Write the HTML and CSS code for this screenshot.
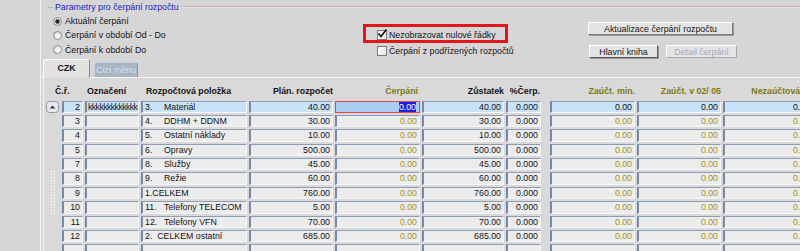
FILE: index.html
```html
<html>
  <head>
    <title>Čerpání rozpočtu</title>
    <link rel="stylesheet" href="styles.css">
  </head>

  <body>
    <div class="window">
      <div class="gutter"></div>
      <div class="content">
        <div class="params">
          <div class="legend-row">
            <span class="dash"></span>
            <span class="legend">Parametry pro čerpání rozpočtu</span>
            <span class="rule"></span>
          </div>
          <div class="params-body">
            <div class="radios">
              <div class="radio-row"><span class="radio radio-on"></span>Aktuální čerpání</div>
              <div class="radio-row"><span class="radio"></span>Čerpání v období Od - Do</div>
              <div class="radio-row"><span class="radio"></span>Čerpání k období Do</div>
            </div>
            <div class="checks">
              <div class="hl-box">
                <div class="check-row">
                  <span class="checkbox">
                    <svg width="11" height="11" viewBox="0 0 11 11"><path d="M1.5 4.5 L4 7.5 L9.5 0.5" fill="none" stroke="#161616" stroke-width="1.7"/></svg>
                  </span>
                  Nezobrazovat nulové řádky
                </div>
              </div>
              <div class="check-row check-row-plain">
                <span class="checkbox"></span>
                Čerpání z podřízených rozpočtů
              </div>
            </div>
            <div class="buttons">
              <button class="btn btn-wide">Aktualizace čerpání rozpočtu</button>
              <div class="btn-row">
                <button class="btn btn-main">Hlavní kniha</button>
                <button class="btn btn-off">Detail čerpání</button>
              </div>
            </div>
          </div>
        </div>

        <div class="tabs">
          <div class="tab tab-active">CZK</div>
          <div class="tab tab-off">Cizí měnu</div>
        </div>

        <div class="panel">
          <div class="grid">
            <div class="hd hd-nr">Č.ř.</div>
            <div class="hd hd-code">Označení</div>
            <div class="hd hd-item">Rozpočtová položka</div>
            <div class="hd right">Plán. rozpočet</div>
            <div class="hd right hd-olive pr2">Čerpání</div>
            <div class="hd right">Zůstatek</div>
            <div class="hd right pr1">%Čerp.</div>
            <div class="hd"></div>
            <div class="hd right hd-olive">Zaúčt. min.</div>
            <div class="hd right hd-olive">Zaúčt. v 02/ 05</div>
            <div class="hd right hd-olive pr2">Nezaúčtováno</div>

            <div class="scroll-up">
              <svg width="13" height="12" viewBox="0 0 13 12"><rect x="0.5" y="0.5" width="12" height="11" rx="3" fill="#e6e8ec" stroke="#9298a2"/><path d="M3.5 7.5 L6.5 4.5 L9.5 7.5 Z" fill="#3a3e46"/></svg>
            </div>
            <div class="scroll-track"><div class="grip"></div></div>

            <div class="row sel">
              <div class="cell right">2</div>
              <div class="cell code">kkkkkkkkkkkkkk</div>
              <div class="cell"><span class="num">3.</span>Materiál</div>
              <div class="cell right">40.00</div>
              <div class="cell right edit"><span class="hl">0.00</span></div>
              <div class="cell right">40.00</div>
              <div class="cell right">0.000</div>
              <div class="gap"></div>
              <div class="cell right">0.00</div>
              <div class="cell right">0.00</div>
              <div class="cell right">0.00</div>
            </div>

            <div class="row">
              <div class="cell right">3</div>
              <div class="cell"></div>
              <div class="cell"><span class="num">4.</span>DDHM + DDNM</div>
              <div class="cell right">30.00</div>
              <div class="cell right olive">0.00</div>
              <div class="cell right">30.00</div>
              <div class="cell right">0.000</div>
              <div class="gap"></div>
              <div class="cell right olive">0.00</div>
              <div class="cell right olive">0.00</div>
              <div class="cell right olive">0.00</div>
            </div>

            <div class="row">
              <div class="cell right">4</div>
              <div class="cell"></div>
              <div class="cell"><span class="num">5.</span>Ostatní náklady</div>
              <div class="cell right">10.00</div>
              <div class="cell right olive">0.00</div>
              <div class="cell right">10.00</div>
              <div class="cell right">0.000</div>
              <div class="gap"></div>
              <div class="cell right olive">0.00</div>
              <div class="cell right olive">0.00</div>
              <div class="cell right olive">0.00</div>
            </div>

            <div class="row">
              <div class="cell right">5</div>
              <div class="cell"></div>
              <div class="cell"><span class="num">6.</span>Opravy</div>
              <div class="cell right">500.00</div>
              <div class="cell right olive">0.00</div>
              <div class="cell right">500.00</div>
              <div class="cell right">0.000</div>
              <div class="gap"></div>
              <div class="cell right olive">0.00</div>
              <div class="cell right olive">0.00</div>
              <div class="cell right olive">0.00</div>
            </div>

            <div class="row">
              <div class="cell right">7</div>
              <div class="cell"></div>
              <div class="cell"><span class="num">8.</span>Služby</div>
              <div class="cell right">45.00</div>
              <div class="cell right olive">0.00</div>
              <div class="cell right">45.00</div>
              <div class="cell right">0.000</div>
              <div class="gap"></div>
              <div class="cell right olive">0.00</div>
              <div class="cell right olive">0.00</div>
              <div class="cell right olive">0.00</div>
            </div>

            <div class="row">
              <div class="cell right">8</div>
              <div class="cell"></div>
              <div class="cell"><span class="num">9.</span>Režie</div>
              <div class="cell right">60.00</div>
              <div class="cell right olive">0.00</div>
              <div class="cell right">60.00</div>
              <div class="cell right">0.000</div>
              <div class="gap"></div>
              <div class="cell right olive">0.00</div>
              <div class="cell right olive">0.00</div>
              <div class="cell right olive">0.00</div>
            </div>

            <div class="row">
              <div class="cell right">9</div>
              <div class="cell"></div>
              <div class="cell">1.CELKEM</div>
              <div class="cell right">760.00</div>
              <div class="cell right olive">0.00</div>
              <div class="cell right">760.00</div>
              <div class="cell right">0.000</div>
              <div class="gap"></div>
              <div class="cell right olive">0.00</div>
              <div class="cell right olive">0.00</div>
              <div class="cell right olive">0.00</div>
            </div>

            <div class="row">
              <div class="cell right">10</div>
              <div class="cell"></div>
              <div class="cell"><span class="num">11.</span>Telefony TELECOM</div>
              <div class="cell right">5.00</div>
              <div class="cell right olive">0.00</div>
              <div class="cell right">5.00</div>
              <div class="cell right">0.000</div>
              <div class="gap"></div>
              <div class="cell right olive">0.00</div>
              <div class="cell right olive">0.00</div>
              <div class="cell right olive">0.00</div>
            </div>

            <div class="row">
              <div class="cell right">11</div>
              <div class="cell"></div>
              <div class="cell"><span class="num">12.</span>Telefony VFN</div>
              <div class="cell right">70.00</div>
              <div class="cell right olive">0.00</div>
              <div class="cell right">70.00</div>
              <div class="cell right">0.000</div>
              <div class="gap"></div>
              <div class="cell right olive">0.00</div>
              <div class="cell right olive">0.00</div>
              <div class="cell right olive">0.00</div>
            </div>

            <div class="row">
              <div class="cell right">12</div>
              <div class="cell"></div>
              <div class="cell pre">2.  CELKEM ostatní</div>
              <div class="cell right">685.00</div>
              <div class="cell right olive">0.00</div>
              <div class="cell right">685.00</div>
              <div class="cell right">0.000</div>
              <div class="gap"></div>
              <div class="cell right olive">0.00</div>
              <div class="cell right olive">0.00</div>
              <div class="cell right olive">0.00</div>
            </div>

            <div class="row">
              <div class="cell"></div>
              <div class="cell"></div>
              <div class="cell"></div>
              <div class="cell"></div>
              <div class="cell"></div>
              <div class="cell"></div>
              <div class="cell"></div>
              <div class="gap"></div>
              <div class="cell"></div>
              <div class="cell"></div>
              <div class="cell"></div>
            </div>
          </div>
        </div>
      </div>
    </div>
  </body>
</html>
```

FILE: styles.css
```css
:root {
  --bg: #d6d6d6;
  --panel: #d9d9d9;
  --cell: #ececec;
  --cell-sel: #c9e2f8;
  --cell-edit: #a8cdf1;
  --edge-dark: #7789aa;
  --edge-top: #8d9cb8;
  --edge-light: #f7f7f7;
  --text: #141414;
  --olive: #a39628;
  --olive-head: #7b7a14;
  --legend: #1c1cc6;
  --red: #e3141e;
}
* {
  box-sizing: border-box;
  margin: 0;
  padding: 0;
}
body {
  font-family: "Liberation Sans", Arial, sans-serif;
  font-size: 8.8px;
  color: var(--text);
  background: var(--bg);
}

.window {
  display: flex;
  height: 251px;
  overflow: hidden;
}
.gutter {
  width: 41px;
  flex: none;
  border-right: 1px solid #f1f1f1;
}
.content {
  flex: 1;
  min-width: 0;
  display: flex;
  flex-direction: column;
}

/* parametry */
.params {
  height: 59px;
  flex: none;
}
.legend-row {
  display: flex;
  align-items: center;
  height: 12px;
  margin-top: 1px;
  padding-left: 7px;
}
.dash {
  width: 5px;
  border-top: 1px solid #c6afaf;
}
.legend {
  color: var(--legend);
  padding: 0 3px 0 2px;
}
.rule {
  flex: 1;
  border-top: 1px solid #c6afaf;
  border-bottom: 1px solid #ebe3e3;
}
.params-body {
  display: flex;
}
.radios {
  width: 322px;
  padding: 1px 0 0 12px;
}
.radio-row {
  display: flex;
  align-items: center;
  gap: 3px;
  height: 14.3px;
}
.radio {
  width: 9px;
  height: 9px;
  border-radius: 50%;
  border: 1px solid #8e8e8e;
  background: radial-gradient(circle at 65% 65%, #ffffff 0, #f2f2f2 40%, #c4c4c4 100%);
}
.radio-on {
  background: radial-gradient(circle, #1e1e1e 0, #2a2a2a 1.8px, #e8e8e8 2.6px, #c8c8c8 100%);
}
.checks {
  width: 225px;
  padding-top: 11px;
}
.hl-box {
  width: 145px;
  height: 19.3px;
  border: 3px solid var(--red);
  padding-left: 11px;
  display: flex;
  align-items: flex-end;
}
.check-row {
  display: flex;
  align-items: center;
  gap: 2px;
  height: 10px;
}
.check-row-plain {
  margin-top: 2.7px;
  padding-left: 14px;
}
.checkbox {
  width: 10px;
  height: 10px;
  flex: none;
  border: 1px solid #7c7c7c;
  background: linear-gradient(135deg, #ffffff, #e8e8e8);
  overflow: visible;
}
.checkbox svg {
  display: block;
  margin: -2px 0 0 -1px;
}
.buttons {
  padding-top: 9px;
}
.btn {
  display: block;
  height: 13px;
  font: inherit;
  color: var(--text);
  background: #e4e4e4;
  border: 1px solid;
  border-color: #ffffff #7d7d7d #7d7d7d #ffffff;
  box-shadow: 1px 1px 0 #9a9a9a;
  line-height: 10px;
  text-align: center;
}
.btn-wide {
  width: 145px;
}
.btn-row {
  display: flex;
  margin-top: 10px;
}
.btn-main {
  width: 69px;
  margin-left: 1px;
  border-color: #ffffff #5c5c5c #5c5c5c #ffffff;
}
.btn-off {
  width: 71px;
  margin-left: 8px;
  color: #a3abb9;
  box-shadow: none;
  border-color: #ffffff #a8a8a8 #a8a8a8 #ffffff;
}

/* zalozky */
.tabs {
  display: flex;
  align-items: flex-end;
  height: 19px;
  flex: none;
  padding-left: 2px;
  border-bottom: 1px solid #f8f8f8;
}
.tab {
  border-radius: 3px 3px 0 0;
  text-align: center;
}
.tab-active {
  width: 47px;
  height: 19px;
  margin-bottom: -1px;
  padding-top: 3px;
  font-weight: bold;
  background: #e2e2e2;
  border: 1px solid;
  border-color: #ffffff #8c8c8c transparent #ffffff;
}
.tab-off {
  width: 44px;
  height: 15px;
  margin-left: 4px;
  padding-top: 2px;
  color: #d9e0ea;
  background: #a8b5c5;
  border: 1px solid;
  border-color: #c8d2de #8e9aab transparent #c8d2de;
}

/* tabulka */
.panel {
  flex: 1;
  margin-left: 2px;
  padding: 7px 0 0 2px;
  border-left: 1px solid #f3f3f3;
  background: var(--panel);
  overflow: hidden;
}
.grid {
  display: grid;
  grid-template-columns: 14px 21px 54px 106px 84px 85px 82px 35px 5px 85px 84px 90px;
  grid-template-rows: 13.5px repeat(11, 12.4px);
  column-gap: 2px;
  row-gap: 2px;
}
.hd {
  font-weight: bold;
  line-height: 12px;
  white-space: nowrap;
}
.hd-nr {
  grid-column: 1 / span 2;
  padding-left: 9px;
}
.hd-code {
  padding-left: 2px;
}
.hd-item {
  padding-left: 5px;
}
.hd-olive {
  color: var(--olive-head);
}
.right {
  text-align: right;
}
.pr1 {
  padding-right: 1px;
}
.pr2 {
  padding-right: 2px;
}

.scroll-up {
  grid-column: 1;
  grid-row: 2;
}
.scroll-up svg {
  display: block;
}
.scroll-track {
  grid-column: 1;
  grid-row: 3 / span 10;
}
.grip {
  width: 6px;
  height: 46px;
  margin: 55px 0 0 4px;
  background-image: radial-gradient(circle, #f6f6f6 0, #f6f6f6 0.7px, transparent 1.1px);
  background-size: 3px 3px;
}

.row {
  display: contents;
}
.cell {
  background: var(--cell);
  border-style: solid;
  border-width: 1px 1px 1px 2px;
  border-color: var(--edge-top) var(--edge-light) var(--edge-light) var(--edge-dark);
  padding: 0 2px;
  line-height: 10.4px;
  white-space: nowrap;
  overflow: hidden;
}
.row .cell:first-child {
  grid-column: 2;
}
.sel .cell {
  background: var(--cell-sel);
}
.sel .cell.edit {
  background: var(--cell-edit);
  border: 1px solid #e24a4c;
  padding-right: 3px;
}
.hl {
  background: #1f1fe4;
  color: #ffffff;
}
.olive {
  color: var(--olive);
}
.code {
  padding-left: 1px;
  letter-spacing: -0.6px;
}
.num {
  display: inline-block;
  width: 19px;
}
.pre {
  white-space: pre;
}
```
